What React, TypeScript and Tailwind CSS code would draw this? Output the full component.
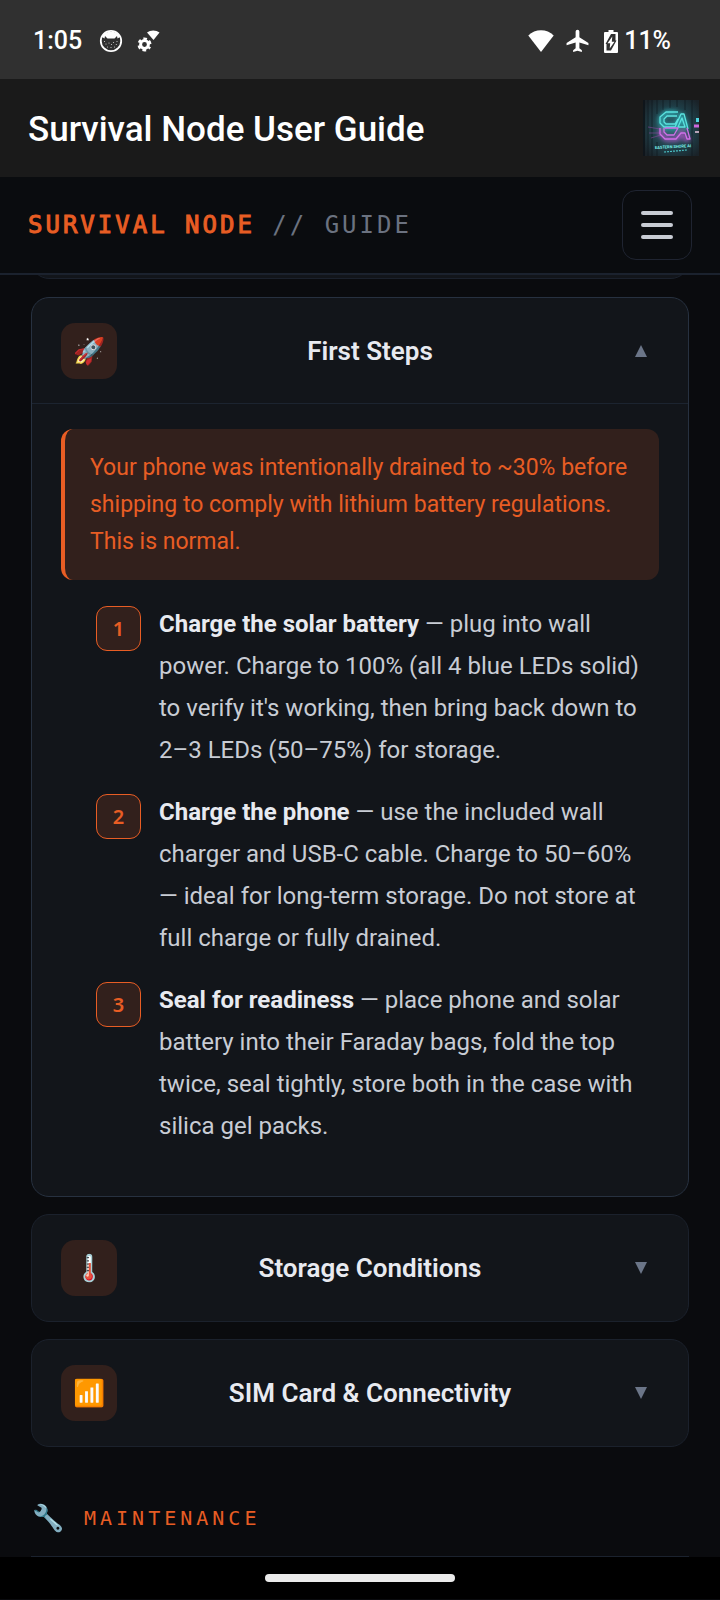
import type { ReactNode } from "react";
import { clsx } from "clsx";

const steps = [
  {
    title: "Charge the solar battery",
    text: "plug into wall power. Charge to 100% (all 4 blue LEDs solid) to verify it's working, then bring back down to 2–3 LEDs (50–75%) for storage.",
  },
  {
    title: "Charge the phone",
    text: "use the included wall charger and USB-C cable. Charge to 50–60% — ideal for long-term storage. Do not store at full charge or fully drained.",
  },
  {
    title: "Seal for readiness",
    text: "place phone and solar battery into their Faraday bags, fold the top twice, seal tightly, store both in the case with silica gel packs.",
  },
];

const StatusBar = () => (
  <div className="flex h-[79px] items-center justify-between bg-[#303030] pt-[3px] pl-[33px] pr-[49px] text-[25px] font-medium text-white">
    <div className="flex items-center">
      <span>1:05</span>
      <svg viewBox="0 0 24 24" className="ml-[17px] size-6">
        <circle cx="12" cy="12" r="10.2" fill="none" stroke="#fff" strokeWidth="1.8" />
        <path d="M3 8C5 1 19 1 21 8l-2.500 1.500L18 7l-2.500 2.500h-7L6 7l-.5 2.500z" fill="#fff" />
        <path d="M5.500 12.500h.01M7 15h.01M10 14h.01M12.500 15.500h.01M14.500 13.500h.01M18 12.500h.01M17.300 15.500h.01M8.500 18h.01M12 18.500h.01M15.500 18h.01" stroke="#ccc" strokeWidth="1.200" strokeLinecap="round" />
      </svg>
      <svg viewBox="0 0 24 24" className="ml-[14px] size-6">
        <path d="M10 3.500C13.500.8 19 .8 22.500 3.500L16.500 11z" fill="#fff" />
        <g fill="none" stroke="#fff">
          <circle cx="7.500" cy="15.500" r="3.900" strokeWidth="3" />
          <circle cx="7.500" cy="15.500" r="5.800" strokeWidth="2.400" strokeDasharray="3.400 2.674" strokeDashoffset="1.700" transform="rotate(30 7.500 15.500)" />
        </g>
      </svg>
    </div>
    <div className="flex items-center">
      <svg viewBox="0 0 26 22" className="h-[22px] w-[26px]">
        <path d="M.3 5.500C7-1.500 19-1.500 25.700 5.500L13 22z" fill="#fff" />
      </svg>
      <svg viewBox="0 0 24 24" className="ml-[11px] size-[25px]">
        <path d="M22.500 15.700v-2.200L13.800 8V2.400a1.800 1.800 0 0 0-3.600 0V8l-8.700 5.500v2.200l8.700-2.800v5.600L7.800 20.300V22l4.200-1.200 4.200 1.200v-1.700l-2.400-1.800v-5.600z" fill="#fff" />
      </svg>
      <svg viewBox="0 0 14 23" className="ml-[14px] h-[23px] w-[14px]">
        <path d="M4.500 0h5v2H13a1 1 0 0 1 1 1v19a1 1 0 0 1-1 1H1a1 1 0 0 1-1-1V3a1 1 0 0 1 1-1h3.500z" fill="#fff" />
        <path d="M7 4h4.500v6.500h1L7 20.500H2.500V14h-1z" fill="#303030" />
        <path d="M8.300 6.500 3.500 13.300h2.700L5.700 18.500l4.800-6.800H7.800z" fill="#fff" />
      </svg>
      <span className="ml-1.5">11%</span>
    </div>
  </div>
);

const NeonLogo = () => (
  <svg viewBox="0 0 56 56" className="size-14" role="img" aria-label="Eastern Shore AI">
    <defs>
      <radialGradient id="glow" cx="52%" cy="50%" r="65%">
        <stop offset="0" stopColor="#2c6872" />
        <stop offset="0.600" stopColor="#1f3d46" />
        <stop offset="1" stopColor="#1a2228" />
      </radialGradient>
      <filter id="neon" x="-30%" y="-30%" width="160%" height="160%">
        <feGaussianBlur stdDeviation="2" />
      </filter>
    </defs>
    <rect width="56" height="56" fill="url(#glow)" />
    <path d="M0 0h2v56H0z" fill="#0d1318" opacity="0.800" />
    <path d="M5 0v56M9 0v56M14 0v14M14 42v14M20 0v10M27 0v8M34 0v7M42 0v10M49 0v56" stroke="#0c151a" opacity="0.600" />
    <path d="M5 27l12 2M6 33h11M8 38l10-3" stroke="#7a4590" opacity="0.700" />
    <g fill="none" strokeLinejoin="round" strokeWidth="5" opacity="0.700" filter="url(#neon)">
      <path d="M34 13H23l-5 5v5l4 4h12l4-12 6 14" stroke="#31c9cf" />
      <path d="M18 29v5l5 5h11l5-7 3 7h5" stroke="#bf52d2" />
    </g>
    <g fill="none" strokeLinejoin="round" strokeWidth="1.300">
      <path d="M35 12H23l-6 5v6l4 4h11l6-13h3l4 15M34 16H24l-3 3v3l2 2h9l3-5M39 18l-4 9h7z" stroke="#5be3df" />
      <path d="M17 28v6l5 5h11l5-6h4l2 6h3l-3-11M21 28v4l3 3h7l4-7H22" stroke="#d070e8" />
    </g>
    <path d="M53 20h3" stroke="#4fd5e0" strokeWidth="4" />
    <path d="M51 26h5" stroke="#cc68dc" strokeWidth="3" />
    <path d="M52 32h4" stroke="#b7a3b8" strokeWidth="2" />
    <text x="12" y="49" fontSize="4" fontWeight="700" fill="#7ff5ef" transform="rotate(-3 12 49)">EASTERN SHORE AI</text>
    <path d="M21 52l23-2" stroke="#4cc0c4" strokeWidth="1.200" strokeDasharray="2 1" />
  </svg>
);

const IconTile = ({ children }: { children: ReactNode }) => (
  <span className="flex size-14 shrink-0 items-center justify-center rounded-[14px] bg-[#32201c] text-[26px] leading-none">
    {children}
  </span>
);

type CardProps = { icon: ReactNode; title: string; open?: boolean; children?: ReactNode };

const Card = ({ icon, title, open = false, children }: CardProps) => (
  <section className={clsx("rounded-[18px] border bg-[#12151a]", open ? "border-[#273140]" : "border-[#1b212c]")}>
    <button
      type="button"
      aria-expanded={open}
      className={clsx(
        "flex w-full items-center gap-[18px] px-[29px] pt-[25px] text-[26px] font-semibold text-[#e8eaf0]",
        open ? "pb-6" : "pb-[25px]"
      )}
    >
      <IconTile>{icon}</IconTile>
      <span className="flex-1 text-center leading-8">{title}</span>
      <span className="flex w-9 justify-center">
        <svg viewBox="0 0 12 12" className="size-3" aria-hidden="true">
          <path d={open ? "M6 0l6 12H0z" : "M6 12L0 0h12z"} fill="#6b7588" />
        </svg>
      </span>
    </button>
    {open && <div className="border-t border-[#1c2430] px-[29px] pt-[25px] pb-[49px]">{children}</div>}
  </section>
);

export default function App() {
  return (
    <div className="min-h-screen bg-[#0a0b0e] font-['Roboto',sans-serif] text-[#c8ccd4]">
      <StatusBar />
      <div className="flex h-[98px] items-center justify-between bg-[#1a1a1a] pl-7 pr-[21px]">
        <h1 className="pt-1 text-[35px] font-medium text-white">Survival Node User Guide</h1>
        <NeonLogo />
      </div>
      <header className="flex h-[98px] items-center justify-between border-b-2 border-[#1b222e] bg-[#0a0c0f] px-7">
        <div className="font-['DejaVu_Sans_Mono',monospace] text-2xl tracking-[3px] text-[#e85d24]">
          <span className="[-webkit-text-stroke:1px_#e85d24]">SURVIVAL NODE</span>{" "}
          <span className="text-[#6b7280]">// GUIDE</span>
        </div>
        <button
          type="button"
          aria-label="Menu"
          className="flex size-[70px] flex-col items-center justify-center gap-2 rounded-[14px] border border-[#1f2431]"
        >
          <span className="h-1 w-8 rounded-full bg-[#c8ccd4]" />
          <span className="h-1 w-8 rounded-full bg-[#c8ccd4]" />
          <span className="h-1 w-8 rounded-full bg-[#c8ccd4]" />
        </button>
      </header>

      <main className="px-[31px]">
        <div className="flex h-1 items-end overflow-hidden">
          <div className="h-10 flex-1 shrink-0 rounded-[18px] border border-[#1b212c] bg-[#12151a]" />
        </div>
        <div className="mt-[18px] flex flex-col gap-[17px]">
          <Card icon="🚀" title="First Steps" open>
            <p className="rounded-xl border-l-4 border-[#e85d24] bg-[#32201c] py-5 pr-6 pl-[25px] text-[23px] leading-[37px] text-[#e85d24]">
              Your phone was intentionally drained to ~30% before shipping to comply with lithium battery regulations. This is normal.
            </p>
            <ol className="mt-[23px] flex flex-col gap-5 pr-4 pl-[35px]">
              {steps.map((step, index) => (
                <li key={step.title} className="flex items-start gap-[18px]">
                  <span className="mt-[3px] flex size-[45px] shrink-0 items-center justify-center rounded-[11px] border border-[#e85d24] bg-[#32201c] font-['Noto_Sans',sans-serif] text-xl font-semibold text-[#e85d24]">
                    {index + 1}
                  </span>
                  <p className="flex-1 text-2xl leading-[42px]">
                    <strong className="font-bold text-[#e8eaf0]">{step.title}</strong> — {step.text}
                  </p>
                </li>
              ))}
            </ol>
          </Card>
          <Card icon="🌡️" title="Storage Conditions" />
          <Card icon="📶" title="SIM Card & Connectivity" />
        </div>
        <h2 className="mt-[50px] flex items-center gap-5 border-b border-[#1b222e] pb-[17px] pl-px">
          <span className="text-[26px] leading-[42px]">🔧</span>
          <span className="font-['DejaVu_Sans_Mono',monospace] text-xl leading-[42px] tracking-[4px] text-[#e85d24]">MAINTENANCE</span>
        </h2>
      </main>

      <footer className="flex h-[42px] items-center justify-center bg-black">
        <span className="h-2 w-[190px] rounded-full bg-[#ebebeb]" />
      </footer>
    </div>
  );
}
